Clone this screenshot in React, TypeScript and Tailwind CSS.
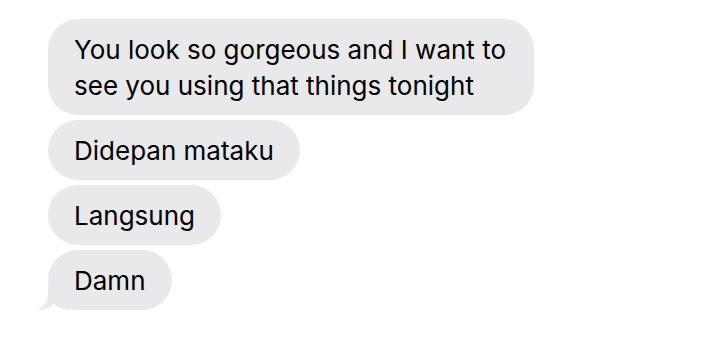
const messages = [
  "You look so gorgeous and I want to see you using that things tonight",
  "Didepan mataku",
  "Langsung",
  "Damn",
];

function Tail() {
  return (
    <svg
      className="absolute -left-[12px] -bottom-[1px] h-[27px] w-[34px]"
      viewBox="0 0 34 27"
      fill="#e9e9eb"
    >
      <path d="M12 0 L12 10 C12 18 8 23 1 25.5 C7 26.2 13 24.5 18 20 C22 23 28 26 34 26 L34 0 Z" />
    </svg>
  );
}

export default function App() {
  return (
    <div className="min-h-[339px] w-[718px] bg-white pl-[48px] pt-[19px] font-['Inter',sans-serif] text-black">
      <div className="flex flex-col items-start gap-[5px]">
        {messages.map((text, i) => (
          <div
            key={i}
            className="relative max-w-[486px] rounded-[30px] bg-[#e9e9eb] pt-[13px] pb-[11px] pl-[26px] pr-[26px] text-[26px] leading-[36px]"
          >
            {text}
            {i === messages.length - 1 && <Tail />}
          </div>
        ))}
      </div>
    </div>
  );
}
